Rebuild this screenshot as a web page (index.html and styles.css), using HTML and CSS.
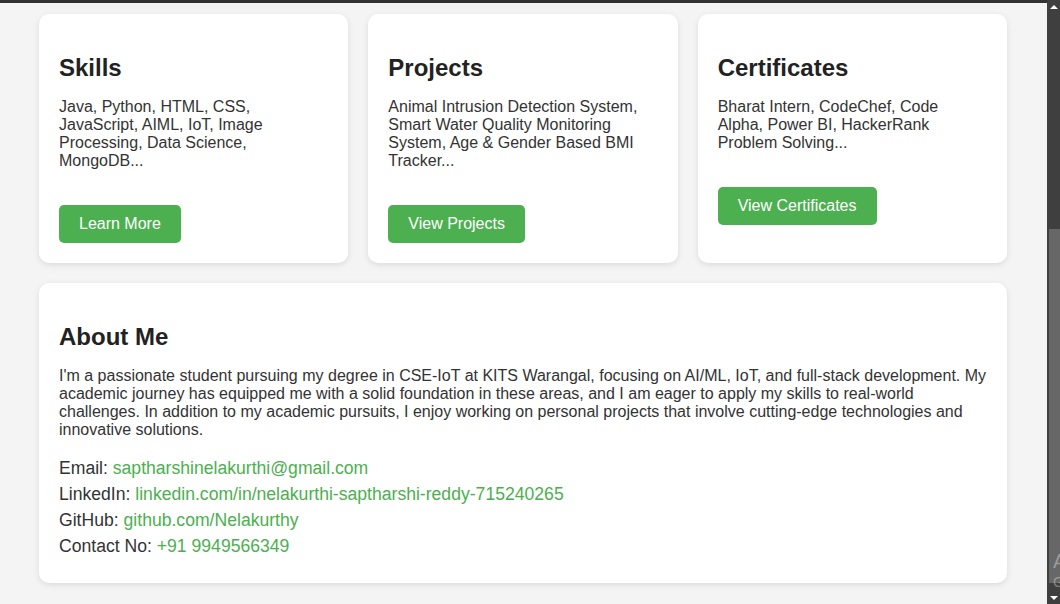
FILE: index.html
```html
<!DOCTYPE html>
<html lang="en">
<head>
<meta charset="utf-8">
<title>Portfolio</title>
<link rel="stylesheet" href="styles.css">
</head>
<body>
<div class="page">
  <div class="header-edge"></div>
  <main class="main">
    <section class="card-row">
      <article class="card">
        <h2>Skills</h2>
        <p>Java, Python, HTML, CSS, JavaScript, AIML, IoT, Image Processing, Data Science, MongoDB...</p>
        <a class="btn" href="#">Learn More</a>
      </article>
      <article class="card">
        <h2>Projects</h2>
        <p>Animal Intrusion Detection System, Smart Water Quality Monitoring System, Age &amp; Gender Based BMI Tracker...</p>
        <a class="btn" href="#">View Projects</a>
      </article>
      <article class="card">
        <h2>Certificates</h2>
        <p>Bharat Intern, CodeChef, Code Alpha, Power BI, HackerRank Problem Solving...</p>
        <a class="btn" href="#">View Certificates</a>
      </article>
    </section>
    <section class="card about">
      <h2>About Me</h2>
      <p>I'm a passionate student pursuing my degree in CSE-IoT at KITS Warangal, focusing on AI/ML, IoT, and full-stack development. My academic journey has equipped me with a solid foundation in these areas, and I am eager to apply my skills to real-world challenges. In addition to my academic pursuits, I enjoy working on personal projects that involve cutting-edge technologies and innovative solutions.</p>
      <div class="contact">
        <div class="contact-line">Email: <a href="#">saptharshinelakurthi@gmail.com</a></div>
        <div class="contact-line">LinkedIn: <a href="#">linkedin.com/in/nelakurthi-saptharshi-reddy-715240265</a></div>
        <div class="contact-line">GitHub: <a href="#">github.com/Nelakurthy</a></div>
        <div class="contact-line">Contact No: <a href="#">+91 9949566349</a></div>
      </div>
    </section>
  </main>
</div>
<aside class="scrollbar">
  <div class="arrow arrow-up"></div>
  <div class="track">
    <div class="thumb"></div>
  </div>
  <div class="arrow arrow-down"></div>
  <div class="watermark">
    <span class="wm-title">Activate Windows</span>
    <span class="wm-sub">Go to Settings to activate Windows.</span>
  </div>
</aside>
</body>
</html>
```

FILE: styles.css
```css
* { box-sizing: border-box; }

html, body {
  margin: 0;
  height: 100%;
}

body {
  display: flex;
  height: 604px;
  overflow: hidden;
  background: #f4f4f4;
  font-family: "Liberation Sans", Arial, sans-serif;
  color: #333;
  font-size: 16px;
}

.page {
  flex: 1;
  min-width: 0;
}

.header-edge {
  height: 3px;
  background: #333;
}

.main {
  width: 968px;
  margin-left: 39px;
  padding-top: 11px;
}

.card-row {
  display: flex;
  gap: 20px;
  margin-bottom: 20px;
}

.card {
  flex: 1;
  background: #fff;
  border-radius: 10px;
  padding: 20px;
  box-shadow: 0 2px 6px rgba(0, 0, 0, 0.1);
}

.card h2 {
  margin: 19.92px 0 16px;
  font-size: 24px;
  font-weight: bold;
  color: #222;
}

.card p {
  margin: 0 0 16px;
  line-height: normal;
}

.btn {
  display: inline-block;
  margin-top: 19px;
  padding: 10px 20px;
  background: #4caf50;
  color: #fff;
  text-decoration: none;
  border-radius: 5px;
  line-height: 18px;
}

.about p {
  margin-bottom: 16px;
}

.contact {
  font-size: 17.6px;
  line-height: 26px;
  padding-bottom: 4px;
}

.contact a {
  color: #4caf50;
  text-decoration: none;
}

/* fake browser scrollbar */
.scrollbar {
  position: relative;
  width: 13px;
  flex: 0 0 13px;
  background: #3f3f3f;
  display: flex;
  flex-direction: column;
  overflow: hidden;
}

.arrow {
  height: 17px;
  display: flex;
  align-items: center;
  justify-content: center;
}

.arrow-up::before,
.arrow-down::before {
  content: "";
  width: 0;
  height: 0;
  border-left: 4px solid transparent;
  border-right: 4px solid transparent;
}

.arrow-up::before { border-bottom: 4px solid #fff; margin-top: -4px; }
.arrow-down::before { border-top: 4px solid #fff; margin-top: 4px; }

.track {
  flex: 1;
  padding-top: 212px;
  padding-bottom: 4px;
  padding-left: 2px;
}

.thumb {
  height: 100%;
  background: #676767;
}

.watermark {
  position: absolute;
  left: 6px;
  top: 549px;
  display: flex;
  flex-direction: column;
  white-space: nowrap;
  color: rgba(255, 255, 255, 0.35);
  font-family: "Liberation Sans", Arial, sans-serif;
}

.wm-title { font-size: 20px; line-height: 24px; }
.wm-sub { font-size: 14px; line-height: 18px; }
```
